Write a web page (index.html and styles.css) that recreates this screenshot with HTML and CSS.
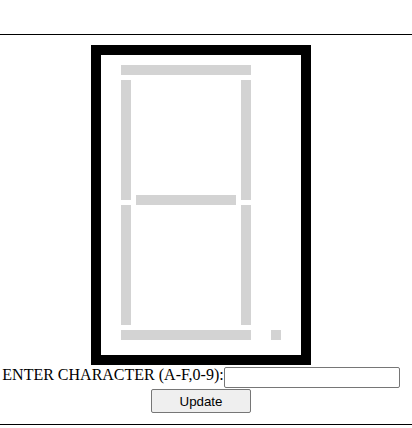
FILE: index.html
```html
<!DOCTYPE html>
<html lang="en">
<head>
<meta charset="utf-8">
<title>Seven Segment Display</title>
<link rel="stylesheet" href="styles.css">
</head>
<body>
<hr class="rule">
<main class="app">
  <div class="display">
    <svg class="segments" width="200" height="300" viewBox="0 0 200 300">
      <rect x="20" y="10" width="130" height="10"/>
      <rect x="20" y="25" width="10" height="120"/>
      <rect x="140" y="25" width="10" height="120"/>
      <rect x="35" y="140" width="100" height="10"/>
      <rect x="20" y="150" width="10" height="120"/>
      <rect x="140" y="150" width="10" height="120"/>
      <rect x="20" y="275" width="130" height="10"/>
      <rect x="170" y="275" width="10" height="10"/>
    </svg>
  </div>
  <div class="entry">
    <label class="entry-label" for="char">ENTER CHARACTER (A-F,0-9):</label>
    <input class="entry-input" id="char" type="text">
  </div>
  <div class="actions">
    <button class="update-btn" type="button">Update</button>
  </div>
</main>
<hr class="rule rule-bottom">
</body>
</html>
```
FILE: styles.css
```css
html, body {
  margin: 0;
  padding: 0;
  background: #fff;
}

body {
  padding-top: 34px;
  font-family: "Liberation Serif", "Times New Roman", serif;
  font-size: 16px;
  color: #000;
}

.rule {
  margin: 0;
  border: 0;
  border-top: 1px solid #000;
  height: 0;
  width: 412px;
}

.app {
  width: 402px;
  display: flex;
  flex-direction: column;
  align-items: center;
}

.display {
  margin-top: 10px;
  width: 200px;
  height: 300px;
  border: 10px solid #000;
  background: #fff;
}

.segments {
  display: block;
}

.segments rect {
  fill: #d3d3d3;
}

.entry {
  display: flex;
  justify-content: center;
  align-items: flex-start;
  width: 402px;
  height: 23px;
}

.entry-label {
  margin-top: 1px;
  line-height: 18px;
  white-space: nowrap;
}

.entry-input {
  margin: 2px 0 0 0;
  box-sizing: border-box;
  width: 176px;
  height: 21px;
  padding: 1px 2px;
  border: 1px solid #767676;
  border-radius: 2px;
  background: #fff;
  font-family: "Liberation Sans", Arial, sans-serif;
  font-size: 13.333px;
}

.actions {
  margin-top: 1px;
  height: 24px;
  margin-bottom: 11px;
}

.update-btn {
  box-sizing: border-box;
  width: 100px;
  height: 24px;
  margin: 0;
  padding: 1px 6px;
  border: 1px solid #767676;
  border-radius: 2px;
  background: #efefef;
  color: #000;
  font-family: "Liberation Sans", Arial, sans-serif;
  font-size: 13.333px;
}
```
